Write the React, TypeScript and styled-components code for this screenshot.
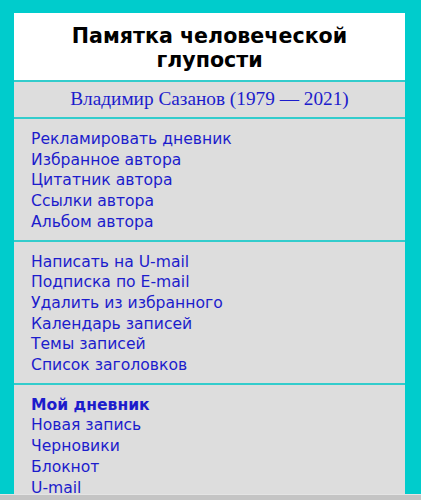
import React from "react";
import styled, { createGlobalStyle } from "styled-components";

const Global = createGlobalStyle`
  html, body { margin: 0; padding: 0; }
  body {
    background: #00cccc;
    font-family: "DejaVu Sans", Verdana, sans-serif;
  }
`;

const Page = styled.div`
  padding: 13px 16px 40px 14px;
`;

const Panel = styled.div`
  background: #dddddd;
  display: flex;
  flex-direction: column;
`;

const TitleBox = styled.h1`
  margin: 0;
  background: #ffffff;
  padding: 11px 10px 8px;
  font-family: "DejaVu Sans", Verdana, sans-serif;
  font-weight: bold;
  font-size: 20.6px;
  line-height: 24px;
  text-align: center;
  color: #000000;
`;

const Section = styled.div<{ $pt: number; $pb: number }>`
  border-top: 2px solid #33cccc;
  padding: ${(p) => p.$pt}px 17px ${(p) => p.$pb}px;
  display: flex;
  flex-direction: column;
`;

const Author = styled.div`
  box-sizing: border-box;
  height: 37px;
  border-top: 2px solid #33cccc;
  padding-bottom: 2px;
  display: flex;
  align-items: center;
  justify-content: center;
  font-family: "Liberation Serif", "Times New Roman", serif;
  font-size: 19.3px;
  color: #1c1ccc;
`;

const Link = styled.a<{ $bold?: boolean }>`
  font-size: 15.6px;
  line-height: 20.7px;
  color: #1c1ccc;
  text-decoration: none;
  font-weight: ${(p) => (p.$bold ? "bold" : "normal")};
`;

const ScrollBar = styled.div`
  position: fixed;
  left: 0;
  right: 0;
  bottom: 0;
  height: 5px;
  background: #c4c4c4;
  border-top: 1px solid #e4e4e4;
`;

const groups: { items: { t: string; b?: boolean }[] }[] = [
  {
    items: [
      { t: "Рекламировать дневник" },
      { t: "Избранное автора" },
      { t: "Цитатник автора" },
      { t: "Ссылки автора" },
      { t: "Альбом автора" },
    ],
  },
  {
    items: [
      { t: "Написать на U-mail" },
      { t: "Подписка по E-mail" },
      { t: "Удалить из избранного" },
      { t: "Календарь записей" },
      { t: "Темы записей" },
      { t: "Список заголовков" },
    ],
  },
  {
    items: [
      { t: "Мой дневник", b: true },
      { t: "Новая запись" },
      { t: "Черновики" },
      { t: "Блокнот" },
      { t: "U-mail" },
    ],
  },
];

export default function App() {
  return (
    <>
      <Global />
      <Page>
        <Panel>
          <TitleBox>
            Памятка человеческой
            <br />
            глупости
          </TitleBox>
          <Author>Владимир Сазанов (1979 — 2021)</Author>
          {groups.map((g, i) => (
            <Section key={i} $pt={10} $pb={7}>
              {g.items.map((it) => (
                <Link key={it.t} href="#" $bold={it.b}>
                  {it.t}
                </Link>
              ))}
            </Section>
          ))}
        </Panel>
      </Page>
      <ScrollBar />
    </>
  );
}
